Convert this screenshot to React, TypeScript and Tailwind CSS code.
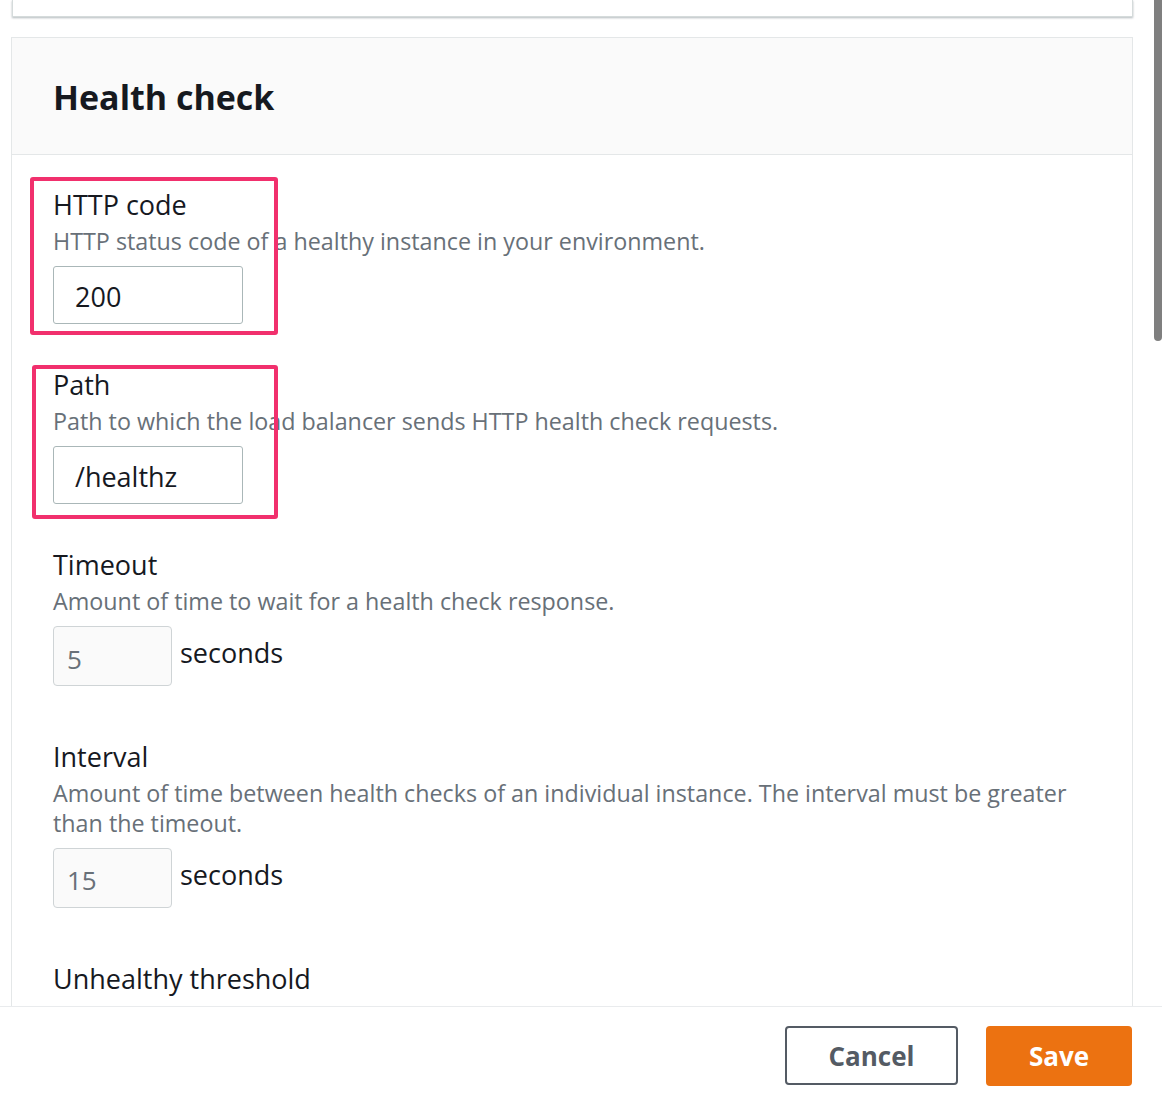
import React from "react"

const font = { fontFamily: '"Open Sans", "Noto Sans", sans-serif' }

function Field({
  label,
  description,
  children,
  highlight,
  className = "",
}: {
  label: string
  description: React.ReactNode
  children: React.ReactNode
  highlight?: string
  className?: string
}) {
  return (
    <div className={`relative ${className}`}>
      {highlight && <div className={`pointer-events-none absolute rounded-[3px] border-4 border-[#f1306d] ${highlight}`} />}
      <div className="text-[27px] leading-[36px] text-[#16191f]">{label}</div>
      <div className="mt-[3px] text-[23.3px] leading-[30px] text-[#687078]">{description}</div>
      {children}
    </div>
  )
}

export default function App() {
  return (
    <div className="flex h-[1104px] w-[1162px] flex-col overflow-hidden bg-white" style={font}>
      {/* Scrollable area */}
      <div className="relative flex-1 overflow-hidden">
        <div className="absolute right-0 top-0 z-10 h-[341px] w-[8px] rounded-b-[4px] bg-[#7f7f7f]" />

        {/* Previous card */}
        <div className="ml-[12px] h-[17px] w-[1121px] border-x border-b border-[#d5dbdb] bg-white shadow-[0_1px_2px_rgba(0,28,36,0.3)]" />

        {/* Health check panel */}
        <div className="ml-[11px] mt-[20px] w-[1122px] border border-[#e4e7e8] bg-white">
          <div className="flex h-[117px] items-center border-b border-[#e4e7e8] bg-[#fafafa] pl-[41px] pt-[2px]">
            <h2 className="text-[34px] font-bold leading-[44px] text-[#16191f]">Health check</h2>
          </div>

          <div className="pl-[41px] pt-[32px]">
            <Field
              label="HTTP code"
              description="HTTP status code of a healthy instance in your environment."
              highlight="-left-[23px] -top-[10px] h-[158px] w-[248px]"
            >
              <div className="mt-[10px] flex h-[58px] w-[190px] items-center rounded-[3px] border border-[#aab7b8] pl-[21px] pt-[5px] text-[27px] text-[#16191f]">
                200
              </div>
            </Field>

            <Field
              label="Path"
              description="Path to which the load balancer sends HTTP health check requests."
              highlight="-left-[21px] -top-[2px] h-[154px] w-[246px]"
              className="mt-[43px]"
            >
              <div className="mt-[10px] flex h-[58px] w-[190px] items-center rounded-[3px] border border-[#aab7b8] pl-[21px] pt-[5px] text-[27px] text-[#16191f]">
                /healthz
              </div>
            </Field>

            <Field label="Timeout" description="Amount of time to wait for a health check response." className="mt-[43px]">
              <div className="mt-[10px] flex items-center gap-[8px]">
                <div className="flex h-[60px] w-[119px] items-center rounded-[4px] border border-[#cfd4d6] bg-[#fafafa] pl-[13px] pt-[6px] text-[26px] text-[#687078]">
                  5
                </div>
                <span className="-mt-[5px] text-[27px] text-[#16191f]">seconds</span>
              </div>
            </Field>

            <Field
              label="Interval"
              description={
                <>
                  Amount of time between health checks of an individual instance. The interval must be greater
                  <br />
                  than the timeout.
                </>
              }
              className="mt-[53px]"
            >
              <div className="mt-[10px] flex items-center gap-[8px]">
                <div className="flex h-[60px] w-[119px] items-center rounded-[4px] border border-[#cfd4d6] bg-[#fafafa] pl-[13px] pt-[5px] text-[26px] text-[#687078]">
                  15
                </div>
                <span className="-mt-[5px] text-[27px] text-[#16191f]">seconds</span>
              </div>
            </Field>

            <Field label="Unhealthy threshold" description="Number of consecutive failed health checks" className="mt-[53px]">
              <div />
            </Field>
          </div>
        </div>
      </div>

      {/* Footer */}
      <div className="flex h-[98px] shrink-0 items-center justify-end gap-[28px] border-t border-[#e9ebed] bg-white pr-[30px]">
        <button className="flex h-[59px] w-[173px] items-center justify-center rounded-[4px] border-2 border-[#545b64] pt-[2px] text-[26px] font-bold text-[#545b64]">
          Cancel
        </button>
        <button className="flex h-[60px] w-[146px] items-center justify-center rounded-[4px] bg-[#ec7211] pt-[2px] text-[26px] font-bold text-white">
          Save
        </button>
      </div>
    </div>
  )
}
